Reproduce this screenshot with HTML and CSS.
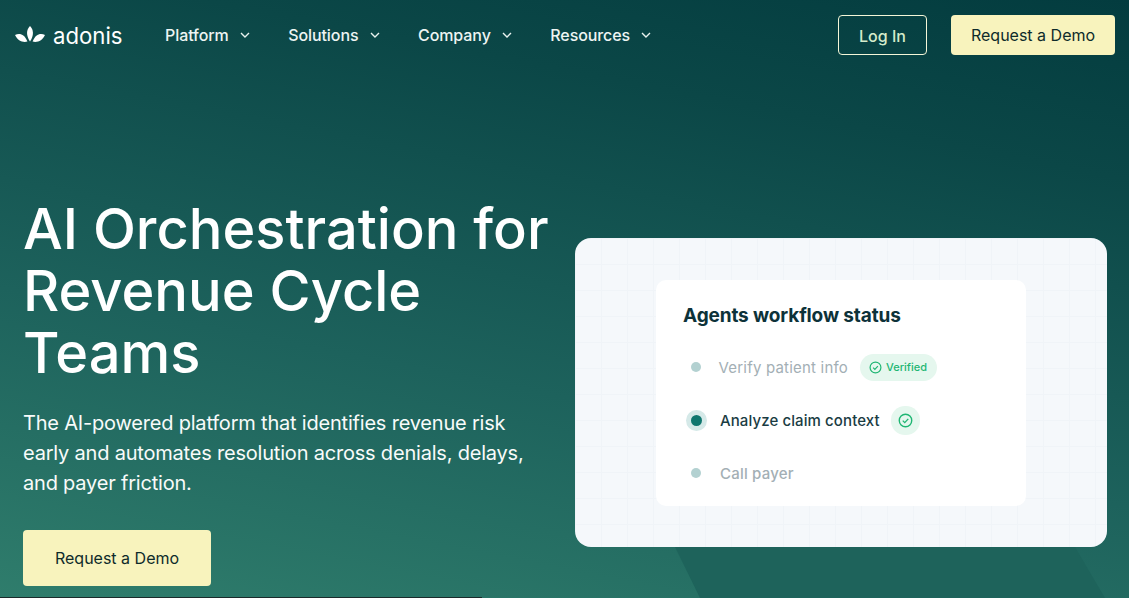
FILE: index.html
```html
<!DOCTYPE html>
<html lang="en">
<head>
    <meta charset="UTF-8">
    <meta name="viewport" content="width=device-width, initial-scale=1.0">
    <title>Adonis</title>
    <link rel="stylesheet" href="styles.css">
</head>
<body>
    <div class="page">
        <nav class="nav">
            <a class="logo" href="#">
                <svg class="logo-mark" width="30" height="18" viewBox="0 0 30 18">
                    <path d="M15 0C18.6 3.6 19.2 9.4 15 15.4C10.8 9.4 11.4 3.6 15 0Z" fill="#fff"/>
                    <path d="M0 9C4.8 6.8 9.6 8.4 12.4 15.6C7.4 16.8 2.6 14.6 0 9Z" fill="#fff"/>
                    <path d="M30 9C25.2 6.8 20.4 8.4 17.6 15.6C22.6 16.8 27.4 14.6 30 9Z" fill="#fff"/>
                </svg>
                <span>adonis</span>
            </a>
            <ul class="nav-links">
                <li class="nav-link">Platform <svg class="chev" width="10" height="6" viewBox="0 0 10 6"><path d="M1 1l4 4 4-4" fill="none" stroke="#e8f2ef" stroke-width="1.4"/></svg></li>
                <li class="nav-link">Solutions <svg class="chev" width="10" height="6" viewBox="0 0 10 6"><path d="M1 1l4 4 4-4" fill="none" stroke="#e8f2ef" stroke-width="1.4"/></svg></li>
                <li class="nav-link">Company <svg class="chev" width="10" height="6" viewBox="0 0 10 6"><path d="M1 1l4 4 4-4" fill="none" stroke="#e8f2ef" stroke-width="1.4"/></svg></li>
                <li class="nav-link">Resources <svg class="chev" width="10" height="6" viewBox="0 0 10 6"><path d="M1 1l4 4 4-4" fill="none" stroke="#e8f2ef" stroke-width="1.4"/></svg></li>
            </ul>
            <div class="nav-actions">
                <a class="btn-login" href="#">Log In</a>
                <a class="btn-demo" href="#">Request a Demo</a>
            </div>
        </nav>

        <section class="hero">
            <div class="hero-copy">
                <h1>AI Orchestration for Revenue Cycle Teams</h1>
                <p>The AI-powered platform that identifies revenue risk early and automates resolution across denials, delays, and payer friction.</p>
                <a class="btn-demo btn-large" href="#">Request a Demo</a>
            </div>
            <div class="hero-visual">
                <div class="panel">
                    <div class="status-card">
                        <h2>Agents workflow status</h2>
                        <div class="step step-done">
                            <span class="dot"></span>
                            <span class="step-label">Verify patient info</span>
                            <span class="pill">
                                <svg width="13" height="13" viewBox="0 0 12 12"><circle cx="6" cy="6" r="5" fill="none" stroke="#1fb673" stroke-width="1.1"/><path d="M3.8 6.1l1.6 1.6 2.8-3" fill="none" stroke="#1fb673" stroke-width="1.1"/></svg>
                                Verified
                            </span>
                        </div>
                        <div class="step step-active">
                            <span class="dot"></span>
                            <span class="step-label">Analyze claim context</span>
                            <span class="pill pill-round">
                                <svg width="15" height="15" viewBox="0 0 12 12"><circle cx="6" cy="6" r="5" fill="none" stroke="#1fb673" stroke-width="1.1"/><path d="M3.8 6.1l1.6 1.6 2.8-3" fill="none" stroke="#1fb673" stroke-width="1.1"/></svg>
                            </span>
                        </div>
                        <div class="step step-todo">
                            <span class="dot"></span>
                            <span class="step-label">Call payer</span>
                        </div>
                    </div>
                </div>
                <div class="panel-shadow"></div>
            </div>
        </section>
        <div class="next-edge"></div>
    </div>
</body>
</html>
```

FILE: styles.css
```css
* {
    box-sizing: border-box;
}

body {
    margin: 0;
    font-family: Inter, "Liberation Sans", sans-serif;
    color: #fff;
}

a {
    text-decoration: none;
}

.page {
    position: relative;
    height: 598px;
    overflow: hidden;
    background: linear-gradient(191deg, #033c3f 0%, #0b4747 22%, #1d625c 62%, #2f7d6c 100%);
}

.nav {
    display: flex;
    align-items: center;
    height: 70px;
    padding: 0 14px 0 15px;
}

.logo {
    display: flex;
    align-items: center;
    gap: 8px;
    width: 150px;
    color: #fff;
    font-size: 22.2px;
}

.nav-links {
    display: flex;
    gap: 38.5px;
    list-style: none;
    margin: 0;
    padding: 0;
}

.nav-link {
    display: flex;
    align-items: center;
    gap: 11px;
    font-size: 16px;
    font-weight: 500;
    letter-spacing: -0.08px;
    color: #eef5f3;
}

.nav-actions {
    display: flex;
    align-items: center;
    gap: 24px;
    margin-left: auto;
}

.btn-login {
    display: flex;
    align-items: center;
    justify-content: center;
    width: 89px;
    height: 40px;
    padding-top: 2px;
    border: 1px solid #f4f6d8;
    border-radius: 4px;
    font-size: 16px;
    font-weight: 500;
    color: #d5eccb;
}

.btn-demo {
    display: flex;
    align-items: center;
    justify-content: center;
    width: 164px;
    height: 40px;
    border-radius: 4px;
    background: #f8f3bd;
    color: #0e2b2b;
    font-size: 16px;
}

.btn-large {
    width: 188px;
    height: 56px;
}

.hero {
    display: flex;
    justify-content: space-between;
    padding: 128px 22px 0 23px;
}

.hero-copy {
    width: 540px;
}

h1 {
    margin: 0 0 24px;
    font-size: 56px;
    font-weight: 500;
    line-height: 62px;
}

.hero-copy p {
    max-width: 510px;
    margin: 0 0 32px;
    font-size: 20px;
    line-height: 30px;
    letter-spacing: -0.2px;
    color: #f8fbfa;
}

.hero-visual {
    position: relative;
    width: 532px;
    padding-top: 40px;
}

.panel {
    position: relative;
    z-index: 1;
    display: flex;
    justify-content: center;
    height: 309px;
    padding-top: 42px;
    border-radius: 16px;
    background-color: #f5f8fb;
    background-image:
        linear-gradient(#f0f4f8 1px, transparent 1px),
        linear-gradient(90deg, #f0f4f8 1px, transparent 1px);
    background-size: 26px 26px;
}

.panel-shadow {
    position: absolute;
    top: 349px;
    left: 100px;
    width: 430px;
    height: 51px;
    background: #1e635b;
    clip-path: polygon(0 0, 400px 0, 100% 100%, 25px 100%);
}

.status-card {
    width: 370px;
    height: 226px;
    padding: 23px 27px;
    border-radius: 10px;
    background: #fff;
}

h2 {
    margin: 0 0 23px;
    font-size: 19px;
    font-weight: 700;
    line-height: 26px;
    letter-spacing: -0.12px;
    color: #0d3239;
}

.step {
    display: flex;
    align-items: center;
    height: 30px;
    margin-bottom: 23px;
    font-size: 15px;
}

.dot {
    width: 10px;
    height: 10px;
    margin: 0 17px 0 8px;
    border-radius: 50%;
    background: #b3d1d1;
}

.step-done .step-label,
.step-todo .step-label {
    color: #a3afb5;
    letter-spacing: 0.2px;
}

.step-done .dot {
    margin-right: 17.5px;
}

.step-todo .dot {
    margin-right: 19px;
}

.step-todo .step-label {
    font-weight: 500;
}

.step-active .step-label {
    font-weight: 500;
    letter-spacing: 0.1px;
    color: #1a3c43;
}

.step-active .dot {
    width: 11px;
    height: 11px;
    margin-right: 18px;
    background: #0f766e;
    box-shadow: 0 0 0 5px #d5e9e8;
}

.pill {
    display: flex;
    align-items: center;
    gap: 4px;
    height: 27px;
    margin-left: 12px;
    padding: 0 10px 0 9px;
    border-radius: 14px;
    background: #e5f7ee;
    color: #1fb673;
    font-size: 11px;
    font-weight: 500;
}

.pill-round {
    justify-content: center;
    width: 29px;
    height: 29px;
    margin-left: 11px;
    padding: 0;
}

.next-edge {
    position: absolute;
    left: 0;
    bottom: 0;
    width: 482px;
    height: 1px;
    background: #1a2b2b;
}
```
